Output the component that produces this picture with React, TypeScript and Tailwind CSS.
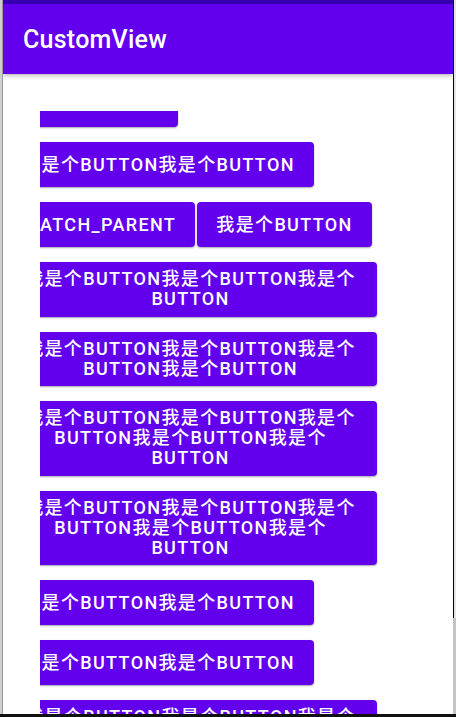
import React from "react";

const unit = "我是个BUTTON";

function Btn({ className, lines }: { className: string; lines: string[] }) {
  return (
    <div
      className={
        "shrink-0 bg-[#6200EE] text-white rounded-[4px] shadow-[0_1px_2px_rgba(0,0,0,0.35)] min-h-[45px] py-[7.25px] flex flex-col items-center justify-center text-center leading-[20px] font-medium text-[18px] tracking-[0.075em] " +
        className
      }
    >
      {lines.map((l, i) => (
        <span key={i} className="whitespace-nowrap">
          {l}
        </span>
      ))}
    </div>
  );
}

export default function App() {
  const wide = [unit + unit + "我是个"];
  return (
    <div className="w-[456px] h-[717px] bg-[#111] flex flex-col overflow-hidden font-['Roboto','Noto_Sans_CJK_SC',sans-serif]">
      <div className="flex h-[714px]">
        <div className="w-[3px] bg-[#cfcfcf] border-r border-[#9a9a9a]" />

        <div className="w-[450px] bg-white flex flex-col overflow-hidden">
          <div className="h-[4px] bg-[#3700B3]" />
          <div className="relative z-10 h-[70px] bg-[#6200EE] shadow-[0_2px_4px_rgba(0,0,0,0.25)] flex items-center pl-[20px] pt-[2px]">
            <h1 className="text-white text-[25px] font-medium tracking-[0.01em]">CustomView</h1>
          </div>

          <div className="flex-1 pl-[37px] pt-[37px] overflow-hidden">
            <div className="h-full overflow-hidden flex flex-col items-start gap-[15px]">
              {/* pushed up and left, only its bottom strip shows */}
              <Btn className="w-[200px] ml-[-62px] mt-[-29px]" lines={["BUTTON"]} />
              <Btn className="w-[311px] ml-[-37px]" lines={[unit + unit]} />
              <div className="flex gap-[2px] shrink-0">
                <Btn className="w-[191px] ml-[-36px]" lines={["MATCH_PARENT"]} />
                <Btn className="w-[175px]" lines={[unit]} />
              </div>
              <Btn className="w-[373px] ml-[-36px]" lines={[...wide, "BUTTON"]} />
              <Btn className="w-[373px] ml-[-36px]" lines={[...wide, "BUTTON我是个BUTTON"]} />
              <Btn
                className="w-[373px] ml-[-36px]"
                lines={[...wide, "BUTTON我是个BUTTON我是个", "BUTTON"]}
              />
              <Btn
                className="w-[373px] ml-[-36px]"
                lines={[...wide, "BUTTON我是个BUTTON我是个", "BUTTON"]}
              />
              <Btn className="w-[311px] ml-[-37px]" lines={[unit + unit]} />
              <Btn className="w-[311px] ml-[-37px]" lines={[unit + unit]} />
              <Btn
                className="w-[373px] ml-[-36px]"
                lines={[...wide, "BUTTON我是个BUTTON我是个", "BUTTON"]}
              />
            </div>
          </div>
        </div>

        <div className="w-[3px] flex flex-col">
          <div className="h-[618px] bg-[#e6e6e6] border-l border-black" />
          <div className="flex-1 bg-[#c4c4c4]" />
        </div>
      </div>
      <div className="h-[3px] bg-[#111]" />
    </div>
  );
}
